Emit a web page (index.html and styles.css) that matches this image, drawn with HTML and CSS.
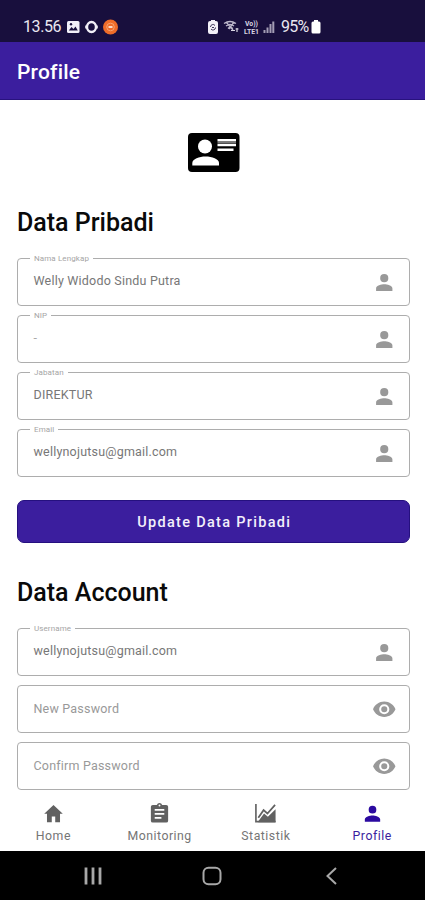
FILE: index.html
```html
<!DOCTYPE html>
<html lang="id">
<head>
<meta charset="utf-8">
<title>Profile</title>
<link rel="stylesheet" href="styles.css">
</head>
<body>
<svg class="defs" width="0" height="0" aria-hidden="true">
  <symbol id="person" viewBox="0 0 24 24"><path d="M12 12a4 4 0 1 0 0-8 4 4 0 0 0 0 8zm0 2c-2.700 0-8 1.300-8 4v2.500h16V18c0-2.700-5.300-4-8-4z"/></symbol>
  <symbol id="eye" viewBox="0 0 24 24"><path d="M12 4.500C7 4.500 2.730 7.610 1 12c1.730 4.390 6 7.500 11 7.500s9.270-3.110 11-7.500c-1.730-4.390-6-7.500-11-7.500zM12 17a5 5 0 1 1 0-10 5 5 0 0 1 0 10zm0-8a3 3 0 1 0 0 6 3 3 0 0 0 0-6z"/></symbol>
</svg>
<div class="screen">
  <header class="status">
    <span class="clock">13.56</span>
    <svg class="status-left" width="52" height="16" viewBox="0 0 52 16">
      <rect x="0" y="2" width="12.500" height="12" rx="1.500" fill="#f2f0f8"/>
      <path d="M1.800 11.500l2.700-3.500 2 2 2-2.500 2.300 4z" fill="#180f3d"/><circle cx="4" cy="5.200" r="1.200" fill="#180f3d"/>
      <ellipse cx="24.500" cy="8" rx="4.500" ry="5" fill="none" stroke="#f2f0f8" stroke-width="2.400"/>
      <path d="M18.700 6.500v3M30.300 6.500v3" stroke="#f2f0f8" stroke-width="1"/>
      <circle cx="43.500" cy="8" r="7.500" fill="#ee6c29"/>
      <circle cx="43.500" cy="8" r="3.800" fill="none" stroke="#f6a371" stroke-width="1"/><path d="M41.500 8h4" stroke="#fff" stroke-width="1.500"/>
    </svg>
    <svg class="status-right" width="68" height="16" viewBox="0 0 68 16">
      <path d="M3 2h1V1h4v1h1q2 0 2 2v9q0 2-2 2H3q-2 0-2-2V4q0-2 2-2z" fill="#f2f0f8"/>
      <path d="M3.500 8a2.500 2.500 0 0 1 4.500-1.500M8.500 8.500A2.500 2.500 0 0 1 4 10M5 8.500h2" fill="none" stroke="#3b3357" stroke-width="1"/>
      <g fill="none" stroke="#bdb8cc" stroke-width="1.300"><path d="M17 4.500q6-4 12 0M19 7q4-3 8 0M21 9.500q2-2 5 0M19 3l7 8M27 3l-5 7"/></g>
      <path d="M24 11.500h4M28.500 10h3M30 9v4" stroke="#d9d6e3" stroke-width="1.200"/>
      <text x="38" y="7" class="volte" textLength="13" lengthAdjust="spacingAndGlyphs">Vo))</text>
      <text x="37" y="14.500" class="volte" textLength="15" lengthAdjust="spacingAndGlyphs">LTE1</text>
      <path d="M57.500 14v-3M60.500 14v-5.500M63.500 14V5M66.300 14V2.500" stroke="#a39db5" stroke-width="2"/>
    </svg>
    <span class="percent">95%</span>
    <svg class="battery" width="10" height="14" viewBox="0 0 10 14"><path d="M3 0h4v1.500h1q1.500 0 1.500 1.500v9q0 1.500-1.500 1.500H2Q.5 13.500.5 12V3Q.5 1.500 2 1.500h1z" fill="#fff"/></svg>
  </header>
  <div class="appbar">Profile</div>
  <main class="content">
    <svg class="card" width="52" height="40" viewBox="0 0 52 40">
      <rect width="51.500" height="39" rx="4" fill="#000"/>
      <circle cx="17" cy="13.500" r="7" fill="#fff"/>
      <path d="M4.300 32.500v-2.500c0-4 7-6.500 13.300-6.500S31 26 31 30v2.500z" fill="#fff"/>
      <path d="M29.500 7.300h18.500M29.500 12h18.500M29.500 16.700h16" stroke="#fff" stroke-width="2.600"/>
      <path d="M29.500 9.500h18.500" stroke="#777" stroke-width="1.600"/>
    </svg>
    <h2 class="heading pribadi">Data Pribadi</h2>
    <div class="fields">
      <div class="field"><span class="label">Nama Lengkap</span><span class="value">Welly Widodo Sindu Putra</span><svg class="icon"><use href="#person"/></svg></div>
      <div class="field"><span class="label">NIP</span><span class="value faint">-</span><svg class="icon"><use href="#person"/></svg></div>
      <div class="field"><span class="label">Jabatan</span><span class="value">DIREKTUR</span><svg class="icon"><use href="#person"/></svg></div>
      <div class="field"><span class="label">Email</span><span class="value">wellynojutsu@gmail.com</span><svg class="icon"><use href="#person"/></svg></div>
    </div>
    <button class="update">Update Data Pribadi</button>
    <h2 class="heading account">Data Account</h2>
    <div class="fields">
      <div class="field"><span class="label">Username</span><span class="value">wellynojutsu@gmail.com</span><svg class="icon"><use href="#person"/></svg></div>
      <div class="field"><span class="value hint">New Password</span><svg class="icon"><use href="#eye"/></svg></div>
      <div class="field"><span class="value hint">Confirm Password</span><svg class="icon"><use href="#eye"/></svg></div>
    </div>
  </main>
  <nav class="tabs">
    <a class="tab"><svg viewBox="0 0 24 24"><path d="M10.200 21v-6h3.600v6h5v-8.700h2.900L12 3l-9.700 9.300h2.900V21z"/></svg><span>Home</span></a>
    <a class="tab"><svg viewBox="0 0 24 24"><path fill-rule="evenodd" d="M19 3h-4.200a3 3 0 0 0-5.600 0H5a2 2 0 0 0-2 2v14.500a2 2 0 0 0 2 2h14a2 2 0 0 0 2-2V5a2 2 0 0 0-2-2zm-7-.4a1 1 0 1 1 0 2 1 1 0 0 1 0-2zM7 7.200h10v2H7zm0 4.200h10v2H7zm0 4.200h7v2H7z"/></svg><span>Monitoring</span></a>
    <a class="tab"><svg viewBox="0 0 24 24"><path d="M2 2v18.500h20.500" fill="none" stroke="#616161" stroke-width="1.700"/><path d="M4.500 16.500L10 8.500l4 3.500L22 3" fill="none" stroke="#616161" stroke-width="1.800"/><path d="M4.500 20l6-8 4 3.500 8-8V21h-18z"/></svg><span>Statistik</span></a>
    <a class="tab active"><svg viewBox="0 0 24 24"><use href="#person"/></svg><span>Profile</span></a>
  </nav>
  <footer class="system">
    <svg width="20" height="20" viewBox="0 0 20 20"><path d="M3 1.500v17M10 1.500v17M17 1.500v17" stroke-width="2.800"/></svg>
    <svg width="20" height="20" viewBox="0 0 20 20"><rect x="1.500" y="1.700" width="17" height="16.600" rx="5"/></svg>
    <svg width="20" height="20" viewBox="0 0 20 20"><path d="M15 2L6.500 10l8.500 8"/></svg>
  </footer>
</div>
</body>
</html>
```
FILE: styles.css
```css
* { box-sizing: border-box; }
body { margin: 0; background: #fff; font-family: Roboto, "Liberation Sans", sans-serif; }
.defs { position: absolute; }
.screen { width: 425px; height: 900px; display: flex; flex-direction: column; overflow: hidden; }
.status { height: 42px; flex: none; background: #180f3d; color: #e9e7f0; display: flex; align-items: center; padding: 11px 0 0 23px; font-size: 16px; line-height: 16px; }
.clock { width: 44px; letter-spacing: -0.4px; }
.status-left { flex: none; }
.status-right { flex: none; margin-left: 88px; }
.volte { font-size: 6.500px; font-weight: 700; fill: #d9d6e3; }
.percent { margin-left: 6px; width: 30px; letter-spacing: -0.8px; }
.battery { margin-top: 1px; flex: none; }
.appbar { height: 58px; flex: none; background: #3b1e9e; border-bottom: 1px solid #28127e; color: #fff; padding: 1px 17px 0; font-size: 21px; letter-spacing: 0.2px; font-weight: 500; line-height: 58px; }
.content { height: 694px; flex: none; padding: 33px 15.500px 0 17px; display: flex; flex-direction: column; }
.card { margin-left: 171px; flex: none; }
.heading { margin: 0; font-size: 25px; line-height: 30px; font-weight: 500; color: #0a0a0a; }
.pribadi { margin-top: 35px; }
.fields { margin-top: 20px; display: flex; flex-direction: column; gap: 9px; }
.field { position: relative; height: 48px; border: 1.500px solid #adadad; border-radius: 4px; display: flex; align-items: center; justify-content: space-between; padding: 0 12px 0 15.500px; }
.label { position: absolute; left: 12px; top: -5px; padding: 0 4px; background: #fff; font-size: 8px; line-height: 9px; letter-spacing: 0.1px; color: #a5a5a5; }
.value { font-size: 12.500px; line-height: 18px; letter-spacing: 0.2px; color: #777; margin-top: -3px; }
.faint { color: #aaa; }
.hint { color: #999; margin-top: 0; }
.icon { width: 24.500px; height: 24.500px; fill: #999; }
.update { margin-top: 23px; height: 43px; flex: none; border: 1px solid #25107f; border-radius: 7px; background: #3b1e9e; color: #f3f0fb; font: 500 14.500px Roboto, sans-serif; letter-spacing: 1.300px; padding: 2px 0 0 2px; }
.account { margin-top: 35px; }
.tabs { height: 57px; flex: none; display: grid; grid-template-columns: repeat(4, 1fr); background: #fff; }
.tab { display: flex; flex-direction: column; align-items: center; padding: 8px 0 0 0.500px; color: #757575; fill: #616161; font-size: 12.300px; line-height: 16px; letter-spacing: 0.5px; }
.tab svg { width: 23px; height: 23px; }
.tab span { margin-top: 3px; }
.active { color: #3b1e9e; fill: #2b0aa0; }
.system { height: 49px; flex: none; background: #000; display: flex; align-items: center; justify-content: center; gap: 99px; padding-right: 2px; fill: none; stroke: #a8a8a8; stroke-width: 2px; }
```
